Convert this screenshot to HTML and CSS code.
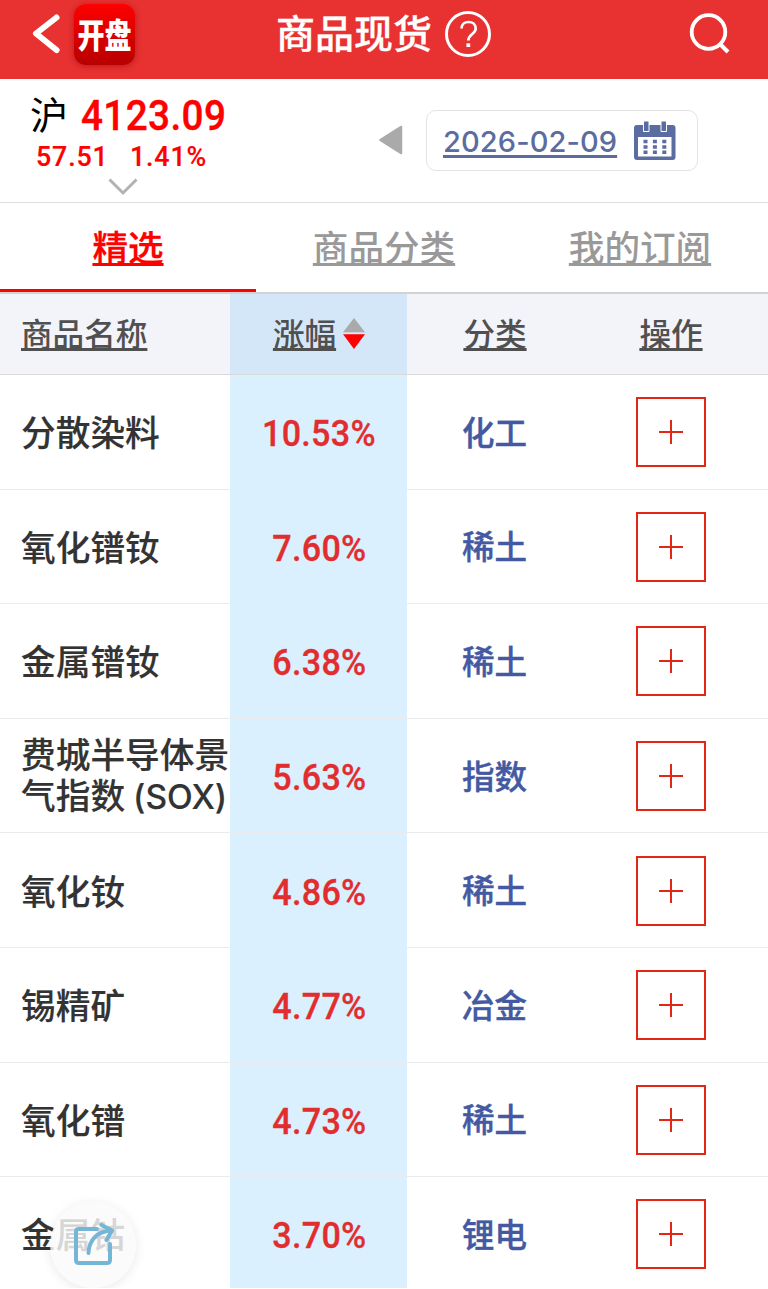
FILE: index.html
```html
<!DOCTYPE html>
<html lang="zh-CN">
<head>
<meta charset="utf-8">
<title>商品现货</title>
<link rel="stylesheet" href="styles.css">
</head>
<body>
<div class="screen">
  <header class="topbar">
    <div class="topbar-left">
      <svg class="back" width="30" height="42" viewBox="0 0 30 42"><path d="M26.500 4.500L6 20.500L26.500 37" fill="none" stroke="#fff" stroke-width="6" stroke-linecap="round" stroke-linejoin="round"/></svg>
      <div class="logo"><span>开盘</span></div>
    </div>
    <div class="topbar-title"><h1>商品现货</h1>
      <svg class="help" width="48" height="48" viewBox="0 0 48 48" fill="none" stroke="#fff"><circle cx="24" cy="24" r="21.500" stroke-width="3"/><path d="M17.500 18.500C17.500 9.800 31.700 9.800 31.700 18.500C31.700 24 24.300 24 24.300 30.500" stroke-width="2.700"/><path d="M24.300 33.300V37" stroke-width="3.800"/></svg>
    </div>
    <svg class="search" width="44" height="44" viewBox="0 0 44 44" fill="none" stroke="#fff"><circle cx="20.500" cy="20" r="16.800" stroke-width="3.800"/><path d="M32 32L40 40" stroke-width="4"/></svg>
  </header>

  <section class="quote">
    <div class="index">
      <div class="index-main"><span class="market">沪</span><span class="price">4123.09</span></div>
      <div class="index-sub"><span>57.51</span><span>1.41%</span></div>
      <svg class="expand" width="30" height="18" viewBox="0 0 30 18"><path d="M1.500 1.500L15 15L28.500 1.500" fill="none" stroke="#b2b2b2" stroke-width="3"/></svg>
    </div>
    <div class="date-nav">
      <svg width="24" height="30" viewBox="0 0 24 30"><path d="M1.500 15L22 2V28Z" fill="#aaa" stroke="#aaa" stroke-width="2.500" stroke-linejoin="round"/></svg>
      <div class="date-box"><span class="date">2026-02-09</span>
        <svg class="calendar" width="42" height="40" viewBox="0 0 42 40"><rect y="4" width="41.500" height="35" rx="3" fill="#5a6ca0"/><path d="M4 16H37.500V35.500H4Z" fill="#fff"/><path d="M9.500 0H15V10.500H9.500ZM27 0H32.500V10.500H27Z" fill="#5a6ca0" stroke="#fff" stroke-width="1"/><path d="M9.500 20.500H34M9.500 26H34M9.500 31.200H34" stroke="#5a6ca0" stroke-width="3.600" stroke-dasharray="4 5.400"/></svg>
      </div>
    </div>
  </section>

  <nav class="tabs"><a class="tab active">精选</a><a class="tab">商品分类</a><a class="tab">我的订阅</a></nav>

  <main class="table">
    <div class="row head">
      <div class="cell name"><span>商品名称</span></div>
      <div class="cell rate"><span>涨幅</span><svg class="sort" width="22" height="31" viewBox="0 0 22 31"><path d="M11 0L22 14.300H0Z" fill="#aaa"/><path d="M0 16.300H22L11 31Z" fill="red"/></svg></div>
      <div class="cell kind"><span>分类</span></div>
      <div class="cell action"><span>操作</span></div>
    </div>
    <div class="row"><div class="cell name"><span>分散染料</span></div><div class="cell rate"><span>10.53%</span></div><div class="cell kind"><span>化工</span></div><div class="cell action"><i class="add"></i></div></div>
    <div class="row"><div class="cell name"><span>氧化镨钕</span></div><div class="cell rate"><span>7.60%</span></div><div class="cell kind"><span>稀土</span></div><div class="cell action"><i class="add"></i></div></div>
    <div class="row"><div class="cell name"><span>金属镨钕</span></div><div class="cell rate"><span>6.38%</span></div><div class="cell kind"><span>稀土</span></div><div class="cell action"><i class="add"></i></div></div>
    <div class="row"><div class="cell name"><span>费城半导体景<br>气指数<b class="latin">(SOX)</b></span></div><div class="cell rate"><span>5.63%</span></div><div class="cell kind"><span>指数</span></div><div class="cell action"><i class="add"></i></div></div>
    <div class="row"><div class="cell name"><span>氧化钕</span></div><div class="cell rate"><span>4.86%</span></div><div class="cell kind"><span>稀土</span></div><div class="cell action"><i class="add"></i></div></div>
    <div class="row"><div class="cell name"><span>锡精矿</span></div><div class="cell rate"><span>4.77%</span></div><div class="cell kind"><span>冶金</span></div><div class="cell action"><i class="add"></i></div></div>
    <div class="row"><div class="cell name"><span>氧化镨</span></div><div class="cell rate"><span>4.73%</span></div><div class="cell kind"><span>稀土</span></div><div class="cell action"><i class="add"></i></div></div>
    <div class="row"><div class="cell name"><span>金属钴</span></div><div class="cell rate"><span>3.70%</span></div><div class="cell kind"><span>锂电</span></div><div class="cell action"><i class="add"></i></div></div>
  </main>

  <div class="share"><svg width="42" height="44" viewBox="0 0 42 44" fill="none" stroke="#75b5d5" stroke-width="4" stroke-linecap="round" stroke-linejoin="round"><path d="M24 6H6Q3 6 3 9V37Q3 40 6 40H34Q37 40 37 37V21"/><path d="M15.500 30C16 17 24 8 39 7.500M28.500 2L39 7.500L33.500 17"/></svg></div>
</div>
</body>
</html>
```
FILE: styles.css
```css
* { box-sizing: border-box; }
body { margin: 0; background: #fff; font-family: "Noto Sans CJK SC", sans-serif; font-weight: 500; color: #333; }
.screen { position: relative; width: 768px; height: 1288px; overflow: hidden; background: #fff; }
svg { display: block; flex: none; }

.topbar { display: grid; grid-template-columns: 1fr auto 1fr; align-items: start; height: 79px; background: #e83131; }
.topbar-left { display: flex; padding-left: 30px; }
.back { margin-top: 13px; }
.logo { display: flex; align-items: center; justify-content: center; width: 61px; height: 61px; margin: 4px 0 0 14px; border-radius: 12px; background: linear-gradient(#ff0000, #b80000); box-shadow: 0 1px 6px rgba(120, 0, 0, .45); color: #fff; font-size: 27px; font-weight: 900; }
.logo span { display: block; line-height: 40px; transform: translateY(-1px) scaleY(1.25); }
.topbar-title { display: flex; }
.topbar-title h1 { margin: 3px 0 0; font-size: 39px; line-height: 56px; font-weight: 500; color: #fff; -webkit-text-stroke: .3px; }
.help { margin: 10px 0 0 12px; }
.search { justify-self: end; margin: 12px 36px 0 0; }

.quote { display: flex; justify-content: space-between; height: 124px; border-bottom: 1px solid #ddd; }
.index { width: 246px; padding-left: 30px; font-family: Roboto, sans-serif; color: #f00; }
.index-main { display: flex; height: 58px; padding-top: 9px; }
.market { font-family: "Noto Sans CJK SC", sans-serif; font-size: 38px; line-height: 50px; font-weight: 400; color: #000; }
.price { margin-left: 13px; font-size: 43px; line-height: 55px; letter-spacing: .4px; transform: scaleX(.9); transform-origin: left; -webkit-text-stroke: .4px; }
.index-sub { display: flex; gap: 24px; padding-left: 6px; font-size: 28.500px; line-height: 40px; letter-spacing: .9px; -webkit-text-stroke: .2px; }
.index-sub span { width: 70px; transform: scaleX(.94); transform-origin: left; }
.expand { margin: 1px 0 0 78px; }
.date-nav { display: flex; padding: 31px 70px 0 0; }
.date-nav > svg { margin: 15px 23px 0 0; }
.date-box { display: flex; width: 272px; height: 61px; border: 1px solid #e3e3e3; border-radius: 10px; padding-left: 16px; }
.date { font-family: Inter, sans-serif; font-size: 29px; line-height: 61px; letter-spacing: .1px; color: #5a6ca0; text-decoration: underline 2.500px; text-underline-offset: 3px; text-decoration-skip-ink: none; white-space: nowrap; }
.calendar { margin: 10px 0 0 17px; }

.tabs { display: grid; grid-template-columns: repeat(3, 256px); height: 90.500px; border-bottom: 2px solid #d2d2d2; }
.tab { text-align: center; font-size: 35.600px; line-height: 86px; color: #999; text-decoration: underline 3px; text-underline-offset: 2px; text-decoration-skip-ink: none; }
.active { color: #f00; border-bottom: 3px solid #f00; height: 88.500px; -webkit-text-stroke: .3px; }

.row { display: grid; grid-template-columns: 230px 177px 175px 177px; height: 114.600px; border-bottom: 1px solid #ebebeb; background: linear-gradient(#daf0fe, #daf0fe) 230px 0 / 177px 100% no-repeat border-box, #fff; }
.cell { display: flex; align-items: center; justify-content: center; }
.cell.name { justify-content: flex-start; padding-left: 21px; font-size: 34.700px; line-height: 41px; white-space: nowrap; -webkit-text-stroke: .15px; }
.cell.name .latin { margin-left: 8px; font-family: Inter, sans-serif; font-size: 33.500px; font-weight: 500; }
.rate { padding: 4px 0 0 1px; font-family: Roboto, sans-serif; font-size: 36.500px; letter-spacing: .3px; color: #e12d2d; -webkit-text-stroke: .3px; }
.rate span { transform: scaleX(.935); }
.kind { padding-bottom: 3px; font-size: 32.500px; color: #4359a2; -webkit-text-stroke: .4px; }
.action { padding: 1px 0 0 1px; }
.head { height: 81.500px; border-color: #d9d9d9; background: linear-gradient(#d4e7f8, #d4e7f8) 230px 0 / 177px 100% no-repeat, #f3f3fa; }
.head .cell { padding-top: 0; padding-bottom: 3px; font-family: "Noto Sans CJK SC", sans-serif; font-size: 31.600px; letter-spacing: 0; color: #505050; -webkit-text-stroke: 0; }
.head .cell span { transform: none; text-decoration: underline 2.500px; text-underline-offset: 2px; text-decoration-skip-ink: none; }
.head .kind { padding-left: 1px; }
.sort { margin: 2px 0 0 7px; }
.head .rate { padding-left: 1px; }
.add { width: 70px; height: 70px; border: 2px solid #e32714; background: linear-gradient(#e32714, #e32714) center / 24px 2px no-repeat, linear-gradient(#e32714, #e32714) center / 2px 24px no-repeat; }

.share { position: absolute; left: 50px; top: 1202px; display: flex; align-items: center; justify-content: center; width: 86px; height: 86px; padding-left: 2px; border-radius: 50%; background: rgba(250, 250, 250, .82); box-shadow: 0 2px 12px rgba(0, 0, 0, .09); }
```
